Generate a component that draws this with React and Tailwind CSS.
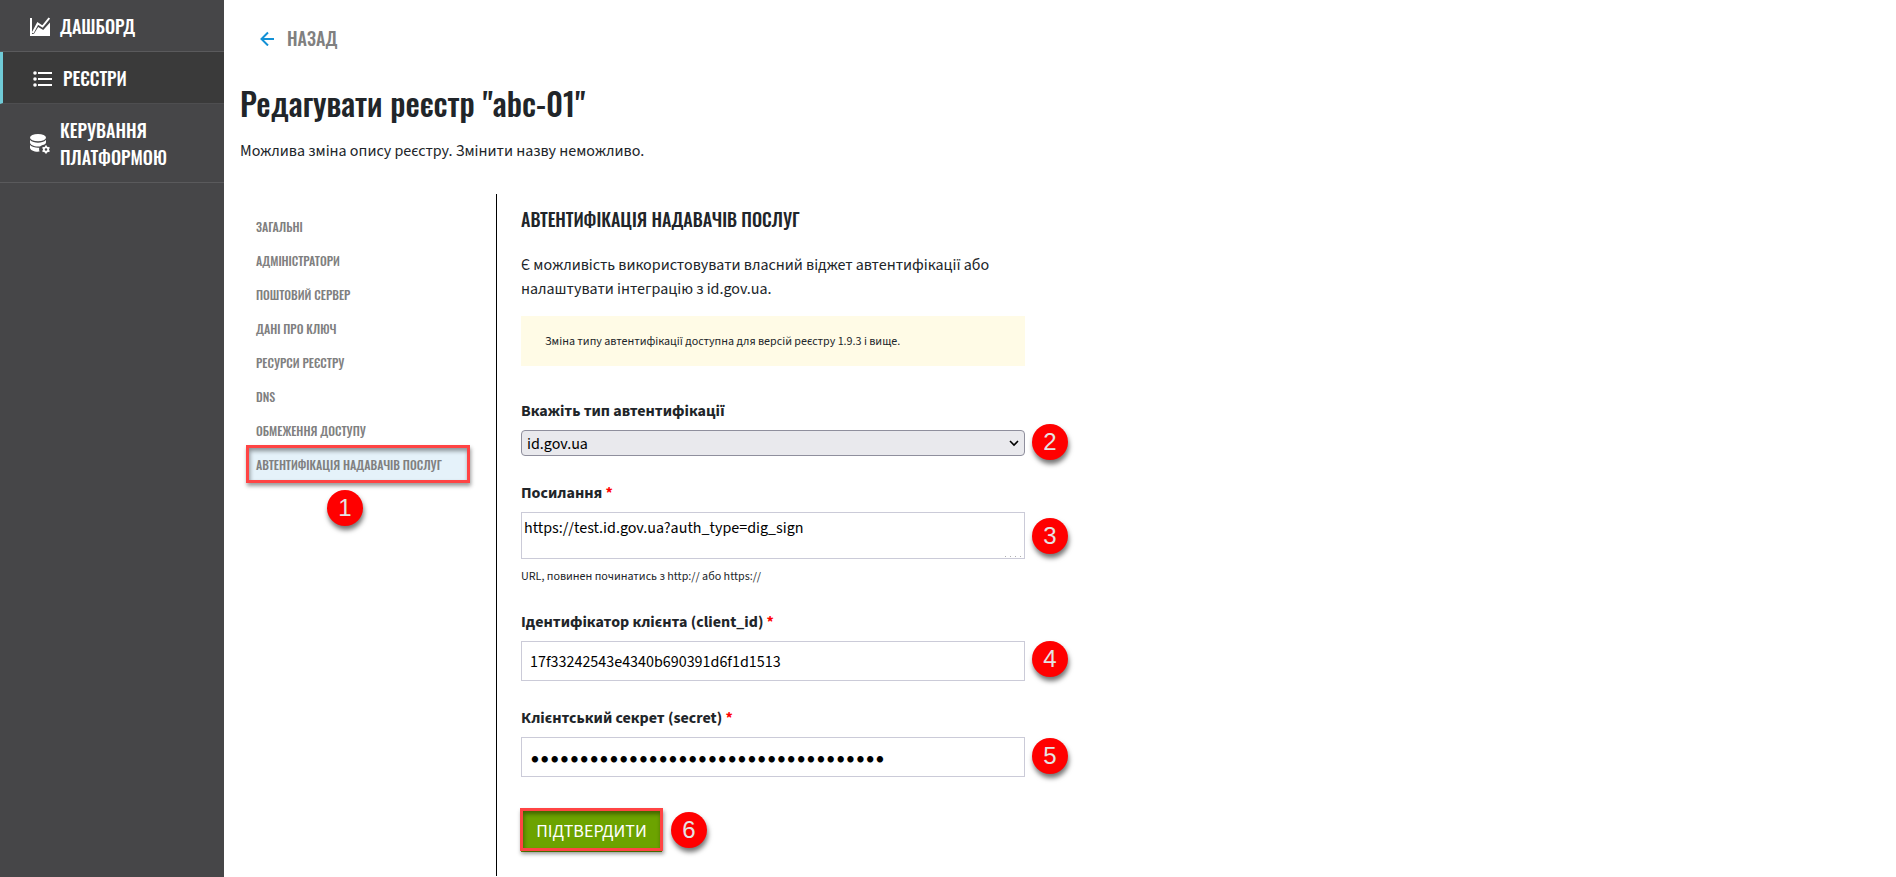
import React from 'react';

const menu = ['Загальні', 'Адміністратори', 'Поштовий сервер', 'Дані про ключ', 'Ресурси реєстру', 'DNS', 'Обмеження доступу', 'Автентифікація надавачів послуг'];

function Marker({ n, className }) {
  return (
    <span className={`absolute flex size-9 items-center justify-center rounded-full bg-[#ff0000] font-['Liberation_Sans',Arial,sans-serif] text-2xl text-[#e4e4e4] shadow-[1px_4px_5px_rgba(0,0,0,0.55)] ${className}`}>
      {n}
    </span>
  );
}

function Frame({ className }) {
  return (
    <span className={`pointer-events-none absolute border-3 border-[#ff4444] shadow-[1px_3px_4px_rgba(0,0,0,0.4),inset_1px_3px_4px_rgba(0,0,0,0.4)] ${className}`} />
  );
}

function ChartIcon() {
  return (
    <svg className="size-5 shrink-0" viewBox="0 0 20 20" fill="none" aria-hidden="true">
      <path d="M0 1h2v16h18v2H0z" fill="#fff" />
      <path d="M2.600 16 7.700 6.500l4.800 3L19.300 1" stroke="#fff" strokeWidth="2" />
      <path d="M3.200 18 8.200 10l5 3L20 5.500V19H3z" fill="#fff" />
    </svg>
  );
}

function ListIcon() {
  return (
    <svg className="size-5 shrink-0" viewBox="0 0 20 20" fill="#fff" aria-hidden="true">
      <circle cx="2" cy="4" r="1.8" />
      <circle cx="2" cy="10" r="1.8" />
      <circle cx="2" cy="16" r="1.8" />
      <path d="M5 3h14v2H5zM5 9h14v2H5zM5 15h14v2H5z" />
    </svg>
  );
}

function DatabaseIcon() {
  return (
    <svg className="size-5 shrink-0" viewBox="0 0 20 20" fill="none" aria-hidden="true">
      <ellipse cx="8" cy="3.600" rx="8" ry="3.600" fill="#fff" />
      <path d="M0 6c1.800 2 5 2.700 8 2.700s6.200-.7 8-2.700v2.200c0 1-.8 1.900-2 2.500-2 .3-3.200 1-4 1.700-.7.100-1.300.1-2 .1-4.400 0-8-1.700-8-4z" fill="#fff" />
      <path d="M0 11c1.800 2 5 2.700 8 2.700h1.300c-.3 1-.3 2.500.3 3.900-.5.100-1 .1-1.600.1-4.400 0-8-1.700-8-4z" fill="#fff" />
      <circle cx="16" cy="15.500" r="2.200" stroke="#fff" strokeWidth="1.800" />
      <path d="M16 11.500V13M16 18v1.500M12.500 13.500l1.400.8M18.100 16.700l1.400.8M12.500 17.500l1.400-.8M18.100 14.300l1.400-.8" stroke="#fff" strokeWidth="1.800" />
    </svg>
  );
}

function Label({ htmlFor, required, children }) {
  return (
    <label htmlFor={htmlFor} className="mb-[7px] block font-bold">
      {children}
      {required && <span className="text-[#ff0000]"> *</span>}
    </label>
  );
}

export default function App() {
  return (
    <div className="flex min-h-screen bg-white font-['Source_Sans_3','Source_Sans_Pro','PT_Sans','Noto_Sans',sans-serif] text-base leading-6 text-[#212529]">
      <aside className="w-56 shrink-0 bg-[#464648] font-['Oswald','Roboto_Condensed',sans-serif] text-lg leading-[27px] font-medium text-white uppercase">
        <nav>
          <a href="#dashboard" className="flex items-center gap-2.5 border-b border-[#5a5a5c] pt-[13px] pr-6 pb-[11px] pl-[30px]">
            <ChartIcon />Дашборд
          </a>
          <a href="#registries" className="flex items-center gap-2.5 border-b border-l-3 border-b-[#4e4e50] border-l-[#6fcad6] bg-[#3a3a3a] pt-[13px] pr-6 pb-[11px] pl-[30px]">
            <ListIcon />Реєстри
          </a>
          <a href="#platform" className="flex items-center gap-2.5 border-b border-[#5a5a5c] pt-[13px] pr-6 pb-[11px] pl-[30px]">
            <DatabaseIcon />Керування платформою
          </a>
        </nav>
      </aside>

      <main className="flex min-w-0 flex-1 flex-col pl-4">
        <a href="#back" className="mt-6 flex items-center gap-3 self-start pl-5 font-['Oswald','Roboto_Condensed',sans-serif] text-lg leading-7 font-medium text-[#808080] uppercase">
          <svg className="h-4 w-[15px]" viewBox="0 0 15 16" fill="none" stroke="#1391d6" strokeWidth="2" aria-hidden="true">
            <path d="M14 9H2M8 2.500 1.500 9 8 15.500" />
          </svg>
          Назад
        </a>
        <h1 className="mt-[27px] font-['Oswald','Roboto_Condensed',sans-serif] text-[32px] leading-12 font-medium">Редагувати реєстр "abc-01"</h1>
        <p className="mt-3">Можлива зміна опису реєстру. Змінити назву неможливо.</p>

        <div className="mt-[31px] flex flex-1">
          <nav className="w-64 shrink-0 pt-4">
            <ul className="font-['Oswald','Roboto_Condensed',sans-serif] text-xs leading-[18px] font-medium text-[#808080] uppercase">
              {menu.map((item, i) => {
                const active = i === menu.length - 1;
                return (
                  <li key={item} className="relative mr-[26px] pl-2">
                    <a href={`#section-${i}`} className={`block py-2 pl-2 whitespace-nowrap ${active ? 'bg-[#e5f2fa]' : ''}`}>{item}</a>
                    {active && <Frame className="-top-[3px] right-0 -bottom-px left-[6px]" />}
                    {active && <Marker n={1} className="top-[42px] left-[87px]" />}
                  </li>
                );
              })}
            </ul>
          </nav>

          <form className="mb-px border-l border-black pl-6" onSubmit={(e) => e.preventDefault()}>
            <div className="w-[504px]">
              <h2 className="mt-3 font-['Oswald','Roboto_Condensed',sans-serif] text-lg leading-[27px] font-medium uppercase">Автентифікація надавачів послуг</h2>
              <p className="mt-5">Є можливість використовувати власний віджет автентифікації або налаштувати інтеграцію з id.gov.ua.</p>
              <p className="mt-[15px] bg-[#fffbe6] px-6 pt-[17px] pb-[15px] text-xs leading-[18px]">Зміна типу автентифікації доступна для версій реєстру 1.9.3 і вище.</p>

              <div className="mt-[33px]">
                <Label htmlFor="auth-type">Вкажіть тип автентифікації</Label>
                <div className="relative">
                  <select id="auth-type" defaultValue="id" className="block h-[26px] w-full appearance-none rounded border border-[#8f8f9d] bg-[#e9e9ed] px-[5px] pt-px text-black">
                    <option value="id">id.gov.ua</option>
                    <option value="widget">Власний віджет</option>
                  </select>
                  <svg className="pointer-events-none absolute top-2 right-1.5 size-2.5" viewBox="0 0 10 10" fill="none" stroke="#000" strokeWidth="1.600" aria-hidden="true">
                    <path d="M1 3l4 4 4-4" />
                  </svg>
                  <Marker n={2} className="-top-1.5 left-[511px]" />
                </div>
              </div>

              <div className="mt-[25px]">
                <Label htmlFor="link" required>Посилання</Label>
                <div className="relative">
                  <textarea id="link" defaultValue="https://test.id.gov.ua?auth_type=dig_sign" className="block h-[47px] w-full resize-none overflow-hidden border border-[#cbcbd8] px-0.5 py-[3px] text-black" />
                  <svg className="pointer-events-none absolute right-1 bottom-0.5 h-px w-4" viewBox="0 0 16 1" fill="#b0b0b0" aria-hidden="true">
                    <path d="M0 0h1v1H0zM5 0h1v1H5zM10 0h1v1h-1zM15 0h1v1h-1z" />
                  </svg>
                  <Marker n={3} className="top-1.5 left-[511px]" />
                </div>
                <p className="mt-[9px] text-xs leading-[18px]">URL, повинен починатись з http:// або https://</p>
              </div>

              <div className="mt-6">
                <Label htmlFor="client" required>Ідентифікатор клієнта (client_id)</Label>
                <div className="relative">
                  <input id="client" type="text" defaultValue="17f33242543e4340b690391d6f1d1513" className="block h-10 w-full border border-[#cbcbd8] px-2 pt-0.5 text-black" />
                  <Marker n={4} className="top-0 left-[511px]" />
                </div>
              </div>

              <div className="mt-[25px]">
                <Label htmlFor="secret" required>Клієнтський секрет (secret)</Label>
                <div className="relative">
                  <input id="secret" type="password" defaultValue="000000000000000000000000000000000000" className="block h-10 w-full border border-[#cbcbd8] px-2 pt-0.5 font-['Lato',sans-serif] text-[17px] text-black" />
                  <Marker n={5} className="top-px left-[511px]" />
                </div>
              </div>

              <div className="relative mt-8 w-[141px]">
                <button type="submit" className="h-[43px] w-full bg-[#6ca300] pt-0.5 text-lg text-white uppercase">Підтвердити</button>
                <Frame className="-inset-x-px -top-px bottom-px" />
                <Marker n={6} className="top-[3px] left-[150px]" />
              </div>
            </div>
          </form>
        </div>
      </main>
    </div>
  );
}
